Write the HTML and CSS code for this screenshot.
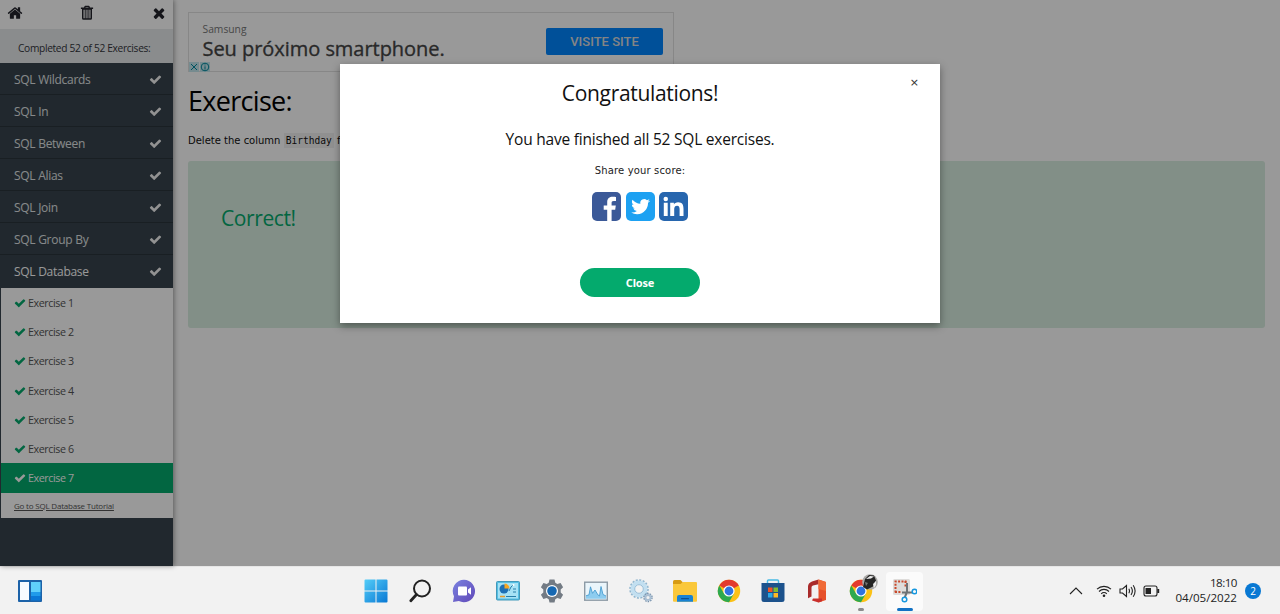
FILE: index.html
```html
<!DOCTYPE html>
<html lang="en">
<head>
<meta charset="utf-8">
<title>SQL Exercises</title>
<link rel="stylesheet" href="styles.css">
</head>
<body>
<svg class="defs" aria-hidden="true">
  <symbol id="check" viewBox="0 0 1792 1792"><path d="M1671 566q0 40-28 68l-724 724-136 136q-28 28-68 28t-68-28l-136-136-362-362q-28-28-28-68t28-68l136-136q28-28 68-28t68 28l294 295 656-657q28-28 68-28t68 28l136 136q28 28 28 68z"/></symbol>
  <symbol id="chrome" viewBox="0 0 24 24">
    <circle cx="12" cy="12" r="11.200" fill="#fbc116"/>
    <path d="M12 12 L2.300 6.400 A11.200 11.200 0 0 1 21.700 6.400 Z" fill="#e33b2e"/>
    <path d="M12 6.400H21.700L20 4L12 2Z" fill="#e33b2e"/>
    <path d="M2.300 6.400 A11.200 11.200 0 0 0 12 23.200 L16.850 14.800 L12 12 L7.150 14.800Z" fill="#2da94f"/>
    <circle cx="12" cy="12" r="5.600" fill="#fff"/>
    <circle cx="12" cy="12" r="4.400" fill="#2f73e0"/>
  </symbol>
</svg>
<div class="browser">
  <aside class="sidebar">
    <div class="tools">
      <svg class="tool" viewBox="0 0 1792 1792"><path d="M1472 992v480q0 26-19 45t-45 19h-384v-384h-256v384h-384q-26 0-45-19t-19-45v-480q0-1 .5-3t.5-3l575-474 575 474q1 2 1 6zm223-69l-62 74q-8 9-21 11h-3q-13 0-21-7l-692-577-692 577q-12 8-24 7-13-2-21-11l-62-74q-8-10-7-23.500t11-21.500l719-599q32-26 76-26t76 26l244 204v-195q0-14 9-23t23-9h192q14 0 23 9t9 23v408l219 182q10 8 11 21.500t-7 23.500z"/></svg>
      <svg class="tool" viewBox="0 0 16 16"><path fill-rule="evenodd" d="M5.500 1.200Q5.700.8 6.200.8h3.600q.5 0 .7.400L11 2.600h3.100v1.300H13v9.400q0 1.500-1.500 1.500h-7Q3 14.800 3 13.300V3.900H1.900V2.600H5zM6.400 2.600h3.200l-.3-.7H6.700zM4.500 4.800v8.400h1.200V4.800zM6.700 4.800v8.400h.9V4.800zM8.500 4.800v8.400h.9V4.800zM10.400 4.800v8.400h1.100V4.800z"/></svg>
      <svg class="tool" viewBox="0 0 1792 1792"><path d="M1490 1322q0 40-28 68l-136 136q-28 28-68 28t-68-28l-294-294-294 294q-28 28-68 28t-68-28l-136-136q-28-28-28-68t28-68l294-294-294-294q-28-28-28-68t28-68l136-136q28-28 68-28t68 28l294 294 294-294q28-28 68-28t68 28l136 136q28 28 28 68t-28 68l-294 294 294 294q28 28 28 68z"/></svg>
    </div>
    <div class="progress"><span>Completed 52 of 52 Exercises:</span></div>
    <nav class="chapters">
      <a class="chapter"><span>SQL Wildcards</span><svg class="check"><use href="#check"/></svg></a>
      <a class="chapter"><span>SQL In</span><svg class="check"><use href="#check"/></svg></a>
      <a class="chapter"><span>SQL Between</span><svg class="check"><use href="#check"/></svg></a>
      <a class="chapter"><span>SQL Alias</span><svg class="check"><use href="#check"/></svg></a>
      <a class="chapter"><span>SQL Join</span><svg class="check"><use href="#check"/></svg></a>
      <a class="chapter"><span>SQL Group By</span><svg class="check"><use href="#check"/></svg></a>
      <a class="chapter open"><span>SQL Database</span><svg class="check"><use href="#check"/></svg></a>
    </nav>
    <div class="exercises">
      <a class="exercise"><svg class="tick"><use href="#check"/></svg><span>Exercise 1</span></a>
      <a class="exercise"><svg class="tick"><use href="#check"/></svg><span>Exercise 2</span></a>
      <a class="exercise"><svg class="tick"><use href="#check"/></svg><span>Exercise 3</span></a>
      <a class="exercise"><svg class="tick"><use href="#check"/></svg><span>Exercise 4</span></a>
      <a class="exercise"><svg class="tick"><use href="#check"/></svg><span>Exercise 5</span></a>
      <a class="exercise"><svg class="tick"><use href="#check"/></svg><span>Exercise 6</span></a>
      <a class="exercise active"><svg class="tick"><use href="#check"/></svg><span>Exercise 7</span></a>
      <div class="tutorial"><span>Go to SQL Database Tutorial</span></div>
    </div>
  </aside>
  <main class="content">
    <section class="ad">
      <div class="ad-copy">
        <div class="ad-brand">Samsung</div>
        <div class="ad-title">Seu próximo smartphone.</div>
      </div>
      <div class="ad-button">VISITE SITE</div>
      <div class="ad-marks">
        <svg viewBox="0 0 10 10"><path d="M2 2l6 6M8 2l-6 6"/></svg>
        <svg viewBox="0 0 10 10"><circle cx="5" cy="5" r="3.800"/><path d="M5 2.500v1M5 4.300v3.300"/></svg>
      </div>
    </section>
    <h1 class="title">Exercise:</h1>
    <p class="task">Delete the column <code>Birthday</code> from the</p>
    <section class="result"><h2>Correct!</h2></section>
  </main>
  <div class="overlay">
    <div class="dialog">
      <span class="dismiss">×</span>
      <h2 class="congrats">Congratulations!</h2>
      <h3 class="finished">You have finished all 52 SQL exercises.</h3>
      <p class="share">Share your score:</p>
      <div class="socials">
        <svg viewBox="0 0 29 29"><rect width="29" height="29" rx="5" fill="#3b5998"/><path fill="#fff" d="M15.200 29V17.800h-3.500v-4.300h3.500v-3.300C15.200 6.500 17.500 4.800 20.700 4.800c1.500 0 2.900.1 3.300.2v3.900h-2.300c-1.800 0-2.100.9-2.100 2.100v2.500h4.200l-.6 4.300h-3.600V29z"/></svg>
        <svg viewBox="0 0 29 29"><rect width="29" height="29" rx="5" fill="#1da1f2"/><path fill="#fff" transform="translate(5.200 5.300) scale(.78)" d="M23.953 4.570a10 10 0 01-2.825.775 4.958 4.958 0 002.163-2.723c-.951.555-2.005.959-3.127 1.184a4.920 4.920 0 00-8.384 4.482C7.690 8.095 4.067 6.130 1.640 3.162a4.822 4.822 0 00-.666 2.475c0 1.710.87 3.213 2.188 4.096a4.904 4.904 0 01-2.228-.616v.06a4.923 4.923 0 003.946 4.827 4.996 4.996 0 01-2.212.085 4.936 4.936 0 004.604 3.417 9.867 9.867 0 01-6.102 2.105c-.39 0-.779-.023-1.170-.067a13.995 13.995 0 007.557 2.209c9.053 0 13.998-7.496 13.998-13.985 0-.21 0-.42-.015-.63A9.935 9.935 0 0024 4.590z"/></svg>
        <svg viewBox="0 0 29 29"><rect width="29" height="29" rx="5" fill="#2766ae"/><path fill="#fff" d="M4.800 10.700h3.900v13.400H4.800zM11.200 10.700h3.700v1.800c.7-1.200 2.100-2.200 4.200-2.200 4.300 0 5.400 2.800 5.400 6.500v7.300h-3.900v-6.500c0-2.100-.3-3.900-2.500-3.900s-2.900 1.700-2.900 3.800v6.600h-4z"/><circle cx="6.750" cy="7" r="2.250" fill="#fff"/></svg>
      </div>
      <button class="close">Close</button>
    </div>
  </div>
</div>
<footer class="taskbar">
  <div class="widgets">
    <svg viewBox="0 0 24 22"><rect width="24" height="22" rx="1" fill="#1c62a8"/><rect x="2" y="2" width="9" height="18" fill="#f7fbff"/><rect x="13" y="2" width="9.500" height="10" fill="#5fd0fa"/><rect x="13" y="12" width="9.500" height="4" fill="#1f9bea"/><rect x="13" y="16" width="9.500" height="4.500" fill="#0a78d6"/></svg>
  </div>
  <div class="apps">
    <div class="app"><svg viewBox="0 0 24 24"><defs><linearGradient id="win" x2="1" y2="1"><stop stop-color="#54cdf8"/><stop offset="1" stop-color="#0878d4"/></linearGradient></defs><path fill="url(#win)" d="M1.500.5h10v11H.5v-10q0-1 1-1zM12.500.5h10q1 0 1 1v10h-11zM.5 12.500h11v11h-10q-1 0-1-1zM12.500 12.500h11v10q0 1-1 1h-10z"/></svg></div>
    <div class="app"><svg viewBox="0 0 24 24" fill="none" stroke="#222"><circle cx="14" cy="9.500" r="8" stroke-width="2"/><path d="M8.500 15.500L2.800 21.800" stroke-width="2.800" stroke-linecap="round"/></svg></div>
    <div class="app"><svg viewBox="0 0 24 24"><defs><linearGradient id="chat" x2="1" y2="1"><stop stop-color="#7b83e0"/><stop offset="1" stop-color="#6048b8"/></linearGradient></defs><path fill="url(#chat)" d="M12 .8A11.200 11.200 0 1 1 6.800 22L1 23l1-5.800A11.200 11.200 0 0 1 12 .8z"/><rect x="6" y="7.500" width="9" height="9" rx="1" fill="#fff"/><path d="M16 10.500l3-2.200v7.400l-3-2.200z" fill="#fff"/></svg></div>
    <div class="app"><svg viewBox="0 0 24 24"><rect x=".5" y="2.500" width="23" height="18.500" rx="1" fill="#55bfe3" stroke="#4399ba"/><rect x="2" y="4" width="20" height="15.500" fill="#a6e2f5"/><circle cx="8" cy="10" r="4.500" fill="#1d70b5"/><path d="M8.500 9.500v-5a5 5 0 0 1 5 5z" fill="#f5a623"/><path d="M4 17.500h5" stroke="#e79d2b" stroke-width="1.500"/><path d="M10 17.500h10M13 12l2-4 2-2M17 10h3M17 13h3" stroke="#287fa9" fill="none"/><circle cx="17.500" cy="6" r="1" fill="#fff"/></svg></div>
    <div class="app"><svg viewBox="0 0 24 24"><path fill="#737b84" d="M9.500.5h5l.8 3.300 2 1.100 3.300-1 2.500 4.300-2.400 2.400v2.800l2.400 2.400-2.500 4.300-3.300-1-2 1.100-.8 3.300h-5l-.8-3.300-2-1.100-3.300 1-2.500-4.300 2.400-2.400v-2.800L.9 8.200l2.500-4.300 3.300 1 2-1.100z"/><circle cx="12" cy="12" r="6" fill="#fff"/><circle cx="12" cy="12" r="4.800" fill="#1668b2"/></svg></div>
    <div class="app"><svg viewBox="0 0 24 24"><rect x=".7" y="3.200" width="22.600" height="18" fill="#eaf5fb" stroke="#8c9aa5" stroke-width="1.400"/><path d="M2 19.800v-3l3-1 1.500-8 2 6.500L11 11l3 5 1.500 1L17 7.500l2 8 3 1.500v2.800z" fill="#8dccef"/><path d="M2 16.800l3-1 1.500-8 2 6.500L11 11l3 5 1.500 1L17 7.500l2 8 3 1.500" stroke="#3c96cd" stroke-width=".8" fill="none"/></svg></div>
    <div class="app"><svg viewBox="0 0 24 24" fill="none"><circle cx="10" cy="10" r="8.800" stroke="#8fb4cd" stroke-width="2" stroke-dasharray="2 1.450"/><circle cx="10" cy="10" r="6.500" stroke="#c2dff0" stroke-width="4"/><circle cx="10" cy="10" r="4.300" stroke="#86b4d2" stroke-width=".8"/><circle cx="19" cy="18.500" r="4" stroke="#7590ab" stroke-width="1.500" stroke-dasharray="1.500 1"/><circle cx="19" cy="18.500" r="2.600" stroke="#a9bfd3" stroke-width="2"/></svg></div>
    <div class="app"><svg viewBox="0 0 24 24"><path d="M0 2.500q0-1.500 1.500-1.500h6L10 3.500V7H0z" fill="#d79b13"/><path d="M0 5h7.500L10 3h13q1 0 1 1v18q0 .8-1 .8H1q-1 0-1-.8z" fill="#fac83b"/><path d="M4 22.800V18q0-2 2-2h12q2 0 2 2v4.800z" fill="#1783d4"/><rect x="8" y="19" width="8" height="1.300" rx=".6" fill="#0b4f91"/></svg></div>
    <div class="app"><svg><use href="#chrome"/></svg></div>
    <div class="app"><svg viewBox="0 0 24 24"><path d="M6.500 4V2q0-1 1-1h9q1 0 1 1v2" fill="none" stroke="#48bbe5" stroke-width="1.500"/><path d="M.5 4h23v16.500q0 2.500-2.500 2.500H3Q.5 23 .5 20.500z" fill="#1c528c"/><path d="M7 8.500h4.500V13H7z" fill="#f05325"/><path d="M12.500 8.500H17V13h-4.500z" fill="#80ba30"/><path d="M7 14h4.500v4.500H7z" fill="#29a9e8"/><path d="M12.500 14H17v4.500h-4.500z" fill="#fdb924"/></svg></div>
    <div class="app"><svg viewBox="0 0 24 24"><path d="M13.500.5L7 2.500q-4 1.500-4 5v11.700l3.500-1.700V8.500q0-1.500 1.500-2l5.500-1.200z" fill="#a92b2b"/><path d="M13.500.5L21 3v18l-7.500 2.500V5.300z" fill="#e6502a"/><path d="M13.500 5.300V.5L21 3v9l-7.500-2z" fill="#f06a37"/><path d="M7 21.500l6.500 2 3.500-1.200V19.500H8z" fill="#c9302c"/></svg></div>
    <div class="app running">
      <svg><use href="#chrome"/></svg>
      <svg class="avatar" viewBox="0 0 16 16"><circle cx="8" cy="8" r="7.800" fill="#aaa9a7"/><path d="M1 13L3 5l4-4 5 .5 2 5-3 6-6 3z" fill="#252525"/><path d="M4 5l4-3 4 .5-3 2zM11 10l3-3v4l-2 3z" fill="#eee"/><path d="M3 8l3 1-2 3z" fill="#777"/></svg>
    </div>
    <div class="app focused">
      <svg viewBox="0 0 24 24"><rect x="0" y="0" width="17" height="16" rx="1.500" fill="#dedcda"/><path d="M2.500 13.500v-11h11" fill="none" stroke="#c9482b" stroke-width="2" stroke-dasharray="2 1.400"/><path d="M12.500 2v6M2 13h6" fill="none" stroke="#c9482b" stroke-width="2" stroke-dasharray="2 1.400"/><path d="M14 4v9l-2.500 6M9 13.500h10.500" stroke="#6d7275" stroke-width="2" fill="none"/><circle cx="21.500" cy="12.500" r="2.300" stroke="#1597df" stroke-width="1.500" fill="#f9f9f9"/><circle cx="11.500" cy="20.500" r="2.300" stroke="#1597df" stroke-width="1.500" fill="#f9f9f9"/></svg>
    </div>
  </div>
  <div class="tray">
    <svg class="chevron" viewBox="0 0 14 8"><path d="M1 7l6-6 6 6"/></svg>
    <svg class="wifi" viewBox="0 0 16 14"><path d="M1 5.200a10 10 0 0 1 14 0M3 7.500a7 7 0 0 1 10 0M5.200 9.800a4 4 0 0 1 5.600 0"/><circle cx="8" cy="11.800" r="1.300"/></svg>
    <svg class="sound" viewBox="0 0 17 14"><path d="M1 5v4h2.500L7.500 12.500v-11L3.500 5zM9.800 4.800q1.400 2.200 0 4.400M12 3q2.800 4 0 8M14.200 1.300q3.800 5.700 0 11.400"/></svg>
    <svg class="battery" viewBox="0 0 17 12"><rect x="1" y="1" width="13" height="10" rx="2"/><path class="level" d="M2.500 3h5.500v6H2.500z"/><path class="level" d="M14.300 4h1.900v4h-1.900z"/></svg>
    <div class="clock"><span class="time">18:10</span><span class="date">04/05/2022</span></div>
    <div class="badge">2</div>
  </div>
</footer>
</body>
</html>
```
FILE: styles.css
```css
* { box-sizing: border-box; }
body { margin: 0; width: 1280px; height: 614px; overflow: hidden; display: flex; flex-direction: column; font-family: "Open Sans", "Noto Sans", sans-serif; color: #000; }
h1, h2, h3, p { margin: 0; font-weight: 400; }
svg { display: block; flex: none; }
.defs { position: absolute; width: 0; height: 0; }

.browser { position: relative; height: 566px; display: flex; background: #fff; }

.sidebar { width: 173px; height: 566px; display: flex; flex-direction: column; background: #38444d; box-shadow: 1px 0 5px rgba(0, 0, 0, .4); z-index: 1; }
.tools { height: 29px; display: flex; align-items: flex-start; justify-content: space-between; padding: 5px 6px 0 7px; background: #fff; }
.tool { width: 16px; height: 16px; fill: #23242c; }
.progress { height: 34px; display: flex; align-items: center; padding: 4px 0 0 18px; background: #e7e9eb; color: #33363c; font-size: 10.200px; letter-spacing: -.33px; white-space: nowrap; }
.chapter { height: 32px; display: flex; align-items: center; justify-content: space-between; padding: 2px 11px 0 14px; border-bottom: 1px solid #2a343b; color: #e0e4e7; font-size: 12px; letter-spacing: -.28px; }
.chapter.open { height: 32.500px; padding-bottom: 1px; border-bottom: 0; color: #fff; }
.check { width: 13px; height: 13px; fill: #f4f4f4; }
.exercises { margin-left: 1px; background: #fff; }
.exercise { height: 29.300px; display: flex; align-items: center; gap: 2px; padding: 1px 0 0 13px; color: #555; font-size: 10.700px; letter-spacing: -.4px; }
.tick { width: 12px; height: 12px; fill: #04aa6d; }
.exercise.active { background: #04aa6d; color: #fff; }
.active .tick { fill: #fff; }
.tutorial { height: 25.500px; display: flex; align-items: center; padding-left: 13px; color: #555; font-size: 8px; letter-spacing: -.2px; text-decoration: underline; }

.content { flex: 1; padding: 12px 15px 0; }
.ad { position: relative; width: 486px; height: 60px; display: flex; justify-content: space-between; border: 1px solid #e2e2e2; padding: 10px 10px 0 13.500px; }
.ad-brand { color: #777; font: 10.300px/13px "Open Sans"; }
.ad-title { color: #454545; font: 500 20px/26px "Open Sans"; letter-spacing: -.04px; -webkit-text-stroke: .35px #454545; }
.ad-button { width: 117px; height: 27px; margin-top: 5px; border-radius: 2px; background: #0085ff; color: #ddd; display: flex; align-items: center; justify-content: center; font: 500 13px Roboto; }
.ad-marks { position: absolute; left: 0; top: 49px; display: flex; gap: 1px; }
.ad-marks svg { width: 10px; height: 10px; background: #c5e8ee; fill: none; stroke: #00899f; stroke-width: 1; }
.title { height: 40px; margin-top: 9px; font-size: 27px; line-height: 40px; letter-spacing: -.7px; }
.task { height: 18px; margin-top: 11px; font: 10px/18px "DejaVu Sans"; color: #111; white-space: nowrap; }
.task code { padding: 2px; background: #f1f1f1; font: 9.600px "DejaVu Sans Mono"; }
.result { width: 1077px; height: 167px; margin-top: 11px; padding: 40px 33px; border-radius: 3px; background: #d9eee1; color: #04aa6d; }
.result h2 { font-size: 21px; line-height: 34px; letter-spacing: -.4px; }

.overlay { position: absolute; inset: 0; z-index: 2; padding-top: 64px; background: rgba(0, 0, 0, .4); }
.dialog { position: relative; width: 600px; height: 259px; margin: 0 auto; background: #fff; box-shadow: 0 3px 8px rgba(0, 0, 0, .4); display: flex; flex-direction: column; align-items: center; color: #111; }
.dismiss { position: absolute; right: 21px; top: 11px; font: 11px/16px "DejaVu Sans"; color: #333; }
.congrats { margin-top: 12px; font-size: 21px; line-height: 34px; letter-spacing: -.33px; }
.finished { margin-top: 17px; font-size: 15.500px; line-height: 24px; letter-spacing: -.22px; }
.share { margin-top: 11px; font: 10px/17px "DejaVu Sans"; letter-spacing: .15px; color: #222; }
.socials { margin-top: 13px; display: flex; gap: 4.500px; }
.socials svg { width: 29px; height: 29px; }
.close { margin-top: 47px; width: 120px; height: 29px; border: 0; border-radius: 15px; background: #04aa6d; color: #fff; font: 700 11px "Noto Sans"; letter-spacing: -.2px; padding: 0; }

.taskbar { height: 48px; display: grid; grid-template-columns: 354px 572px 1fr; background: #f2f2f2; border-top: 1px solid #e6e6e6; }
.widgets { padding: 13px 0 0 18px; }
.widgets svg { width: 24px; height: 22px; }
.apps { display: grid; grid-template-columns: repeat(13, 44.080px); }
.app { position: relative; display: flex; align-items: center; justify-content: center; height: 48px; }
.app svg { width: 24px; height: 24px; }
.app .avatar { position: absolute; left: 23px; top: 7px; width: 16px; height: 16px; }
.running::after, .focused::after { content: ""; position: absolute; bottom: 4px; width: 6px; height: 3px; border-radius: 2px; background: #8b8b8b; }
.focused::before { content: ""; position: absolute; inset: 5px 4px 4px 3px; border-radius: 4px; background: #fbfbfb; }
.focused svg { position: relative; }
.focused::after { width: 16px; background: #1272c4; }
.tray { display: flex; align-items: center; padding-left: 143px; }
.tray svg { fill: none; stroke: #222; stroke-width: 1.100; }
.chevron { width: 14px; height: 8px; }
.wifi { width: 16px; height: 14px; margin-left: 13px; }
.sound { width: 17px; height: 14px; margin-left: 7px; }
.battery { width: 17px; height: 12px; margin-left: 7px; }
.tray .level, .tray .wifi circle { fill: #222; stroke: none; }
.clock { width: 77px; display: flex; flex-direction: column; align-items: flex-end; padding-bottom: 2px; font-size: 11.600px; line-height: 15px; color: #222; }
.time { letter-spacing: -.5px; }
.badge { width: 16px; height: 16px; margin-left: 8px; border-radius: 50%; background: #0878d3; color: #fff; display: flex; align-items: center; justify-content: center; font-size: 10px; }
```
